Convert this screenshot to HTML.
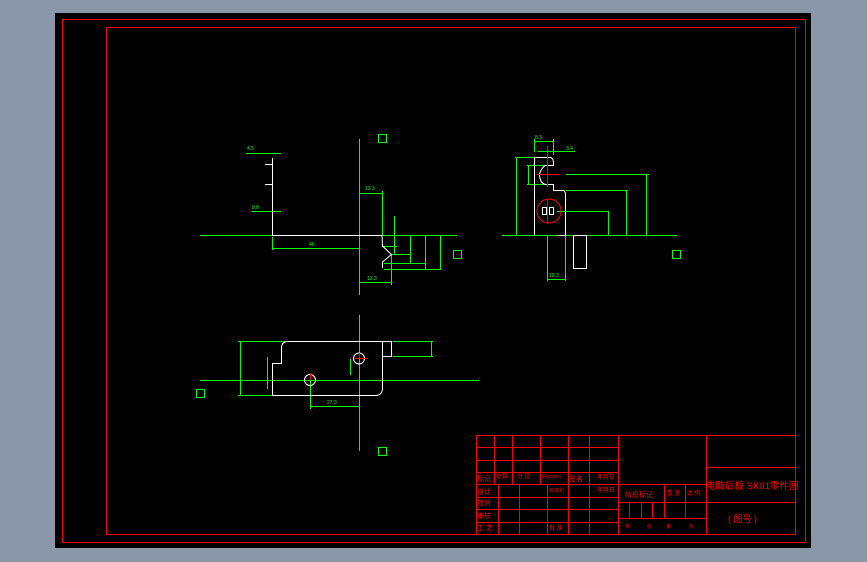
<!DOCTYPE html>
<html><head><meta charset="utf-8"><style>
html,body{margin:0;padding:0;background:#8a97a8;width:867px;height:562px;overflow:hidden}
svg{position:absolute;left:0;top:0}
text{font-family:"Liberation Sans","Noto Sans CJK SC",sans-serif}
</style></head><body>
<svg width="867" height="562" viewBox="0 0 867 562" shape-rendering="crispEdges">
<rect x="55" y="13" width="756" height="535" fill="#000"/>
<rect x="62.5" y="19.5" width="743" height="523" fill="none" stroke="#f00" stroke-width="1"/>
<rect x="106.5" y="27.5" width="689" height="507" fill="none" stroke="#f00" stroke-width="1"/>

<g stroke="#00ff00" fill="none" stroke-width="1">
<!-- view 1 -->
<line x1="200" y1="235.5" x2="457" y2="235.5"/>
<line x1="359.5" y1="139" x2="359.5" y2="295"/>
<line x1="246" y1="153.5" x2="281" y2="153.5"/>
<line x1="252" y1="211.5" x2="281" y2="211.5"/>
<line x1="272.5" y1="237" x2="272.5" y2="250"/>
<line x1="272" y1="248.5" x2="359" y2="248.5"/>
<line x1="359" y1="193.5" x2="382" y2="193.5"/>
<line x1="382.5" y1="191" x2="382.5" y2="235"/>
<line x1="394.5" y1="216" x2="394.5" y2="254"/>
<line x1="382" y1="246.5" x2="397" y2="246.5"/>
<line x1="392" y1="254.5" x2="411" y2="254.5"/>
<line x1="410.5" y1="236" x2="410.5" y2="263"/>
<line x1="384" y1="263.5" x2="426" y2="263.5"/>
<line x1="425.5" y1="236" x2="425.5" y2="269"/>
<line x1="384" y1="269.5" x2="441" y2="269.5"/>
<line x1="440.5" y1="236" x2="440.5" y2="269"/>
<line x1="391.5" y1="255" x2="391.5" y2="285"/>
<line x1="359" y1="282.5" x2="391" y2="282.5"/>
<rect x="378.5" y="134.5" width="8" height="8"/>
<rect x="453.5" y="250.5" width="8" height="8"/>
<!-- view 2 -->
<line x1="502" y1="235.5" x2="677" y2="235.5"/>
<line x1="515" y1="157.5" x2="534" y2="157.5"/>
<line x1="516.5" y1="157" x2="516.5" y2="235"/>
<line x1="527" y1="165.5" x2="545" y2="165.5"/>
<line x1="527" y1="184.5" x2="545" y2="184.5"/>
<line x1="528.5" y1="165" x2="528.5" y2="185"/>
<line x1="566" y1="174.5" x2="649" y2="174.5"/>
<line x1="566" y1="190.5" x2="628" y2="190.5"/>
<line x1="557" y1="211.5" x2="609" y2="211.5"/>
<line x1="646.5" y1="174" x2="646.5" y2="235"/>
<line x1="626.5" y1="190" x2="626.5" y2="235"/>
<line x1="608.5" y1="211" x2="608.5" y2="235"/>
<line x1="534.5" y1="139" x2="534.5" y2="152"/>
<line x1="553.5" y1="139" x2="553.5" y2="155"/>
<line x1="534" y1="141.5" x2="554" y2="141.5"/>
<line x1="538" y1="151.5" x2="575" y2="151.5"/>
<line x1="547.5" y1="235" x2="547.5" y2="281"/>
<line x1="565.5" y1="235" x2="565.5" y2="281"/>
<line x1="547" y1="279.5" x2="566" y2="279.5"/>
<rect x="672.5" y="250.5" width="8" height="8"/>
<!-- view 3 -->
<line x1="200" y1="380.5" x2="479" y2="380.5"/>
<line x1="359.5" y1="315" x2="359.5" y2="451"/>
<line x1="238" y1="341.5" x2="287" y2="341.5"/>
<line x1="240.5" y1="341" x2="240.5" y2="395"/>
<line x1="238" y1="395.5" x2="272" y2="395.5"/>
<line x1="267.5" y1="357" x2="267.5" y2="389"/>
<line x1="393" y1="341.5" x2="433" y2="341.5"/>
<line x1="393" y1="356.5" x2="433" y2="356.5"/>
<line x1="431.5" y1="341" x2="431.5" y2="356"/>
<line x1="350.5" y1="359" x2="350.5" y2="375"/>
<line x1="310.5" y1="380" x2="310.5" y2="409"/>
<line x1="310" y1="406.5" x2="359" y2="406.5"/>
<rect x="196.5" y="389.5" width="8" height="8"/>
<rect x="378.5" y="447.5" width="8" height="8"/>
</g>

<g stroke="#fff" fill="none" stroke-width="1" shape-rendering="auto">
<polyline points="272.5,158 272.5,235.5 382,235.5 382.5,246 391.5,254.5 382.5,262 382.5,268"/>
<line x1="265" y1="164.5" x2="272" y2="164.5"/>
<line x1="265" y1="184.5" x2="272" y2="184.5"/>
<path d="M534.5,235.5 L534.5,157.5 L551,157.5 Q554,159 553.5,165.5 L545,165.5 Q538,172 540,178 Q541,184 546,184.5 L553.5,184.5 L553.5,190.5 L564,190.5 L565.5,193 L565.5,235.5 L557,235.5"/>
<rect x="573.5" y="235.5" width="13" height="33"/>
<path d="M287,341.5 L391.5,341.5 L391.5,356.5 L382.5,356.5 M382.5,341.5 L382.5,389 Q382,395 376,395.5 L272.5,395.5 L272.5,363.5 L281.5,363.5 L281.5,347 Q282,342 287,341.5"/>
<circle cx="310" cy="380" r="5.5"/>
<circle cx="359" cy="358.5" r="5.5"/>
<rect x="542.5" y="207.5" width="4" height="7"/><rect x="549.5" y="207.5" width="4" height="7"/>
</g>
<g stroke="#f00" fill="none" stroke-width="1">
<circle cx="549" cy="211" r="12" shape-rendering="auto"/>
<line x1="547.5" y1="146" x2="547.5" y2="187"/>
<line x1="537" y1="174.5" x2="559" y2="174.5"/>
<line x1="547.5" y1="199" x2="547.5" y2="224"/>
<line x1="359.5" y1="353" x2="359.5" y2="358"/><line x1="354" y1="358.5" x2="368" y2="358.5"/>
<line x1="310.5" y1="373" x2="310.5" y2="380"/>
</g>
<g fill="#00ff00" font-size="5">
<text x="247" y="150">4.5</text><text x="252" y="209">8.8</text><text x="309" y="246">46.</text>
<text x="365" y="190">13.3</text><text x="367" y="280">13.3</text>
<text x="535" y="139">8.3</text><text x="566" y="150">3.4</text><text x="549" y="277">10.3</text>
<text x="327" y="404">27.3</text>
</g>

<!-- title block -->
<g stroke="#f00" fill="none" stroke-width="1">
<line x1="476.5" y1="435.5" x2="795" y2="435.5"/>
<line x1="476.5" y1="435" x2="476.5" y2="534"/>
<line x1="476" y1="447.5" x2="618" y2="447.5"/>
<line x1="476" y1="460.5" x2="618" y2="460.5"/>
<line x1="476" y1="472.5" x2="618" y2="472.5"/>
<line x1="476" y1="484.5" x2="706" y2="484.5"/>
<line x1="476" y1="497.5" x2="618" y2="497.5"/>
<line x1="476" y1="509.5" x2="618" y2="509.5"/>
<line x1="476" y1="522.5" x2="618" y2="522.5"/>
<line x1="494.5" y1="435" x2="494.5" y2="484"/>
<line x1="512.5" y1="435" x2="512.5" y2="484"/>
<line x1="540.5" y1="435" x2="540.5" y2="484"/>
<line x1="568.5" y1="435" x2="568.5" y2="534"/>
<line x1="589.5" y1="435" x2="589.5" y2="534"/>
<line x1="618.5" y1="435" x2="618.5" y2="534"/>
<line x1="498.5" y1="484" x2="498.5" y2="534"/>
<line x1="519.5" y1="484" x2="519.5" y2="534"/>
<line x1="547.5" y1="484" x2="547.5" y2="534"/>
<line x1="618" y1="502.5" x2="706" y2="502.5"/>
<line x1="618" y1="518.5" x2="706" y2="518.5"/>
<line x1="664.5" y1="484" x2="664.5" y2="518"/>
<line x1="685.5" y1="484" x2="685.5" y2="518"/>
<line x1="629.5" y1="502" x2="629.5" y2="518"/>
<line x1="641.5" y1="502" x2="641.5" y2="518"/>
<line x1="652.5" y1="502" x2="652.5" y2="518"/>
<line x1="706.5" y1="435" x2="706.5" y2="534"/>
<line x1="706" y1="467.5" x2="795" y2="467.5"/>
<line x1="706" y1="502.5" x2="795" y2="502.5"/>
</g>
<g fill="#f00" font-family="Liberation Sans, Noto Sans CJK SC, sans-serif" font-size="7">
<text x="477" y="481">标记</text><text x="496" y="478" font-size="6">处数</text><text x="517" y="478" font-size="6">分 区</text>
<text x="542" y="478" font-size="4">更改文件号</text><text x="569" y="481">签名</text><text x="597" y="479" font-size="6">年月日</text>
<text x="477" y="494">设计</text><text x="549" y="492" font-size="5">标准化</text><text x="597" y="492" font-size="6">年月日</text>
<text x="477" y="505">校对</text><text x="477" y="518">审核</text><text x="477" y="530">工 艺</text><text x="549" y="530" font-size="6">批 准</text>
<text x="625" y="497">阶段标记</text><text x="667" y="495" font-size="6">重 量</text><text x="687" y="495" font-size="6">比 例</text>
<text x="625" y="528" font-size="5">共</text><text x="647" y="528" font-size="5">张</text><text x="666" y="528" font-size="5">第</text><text x="689" y="528" font-size="5">张</text>
<text x="706" y="489" font-size="9.5">电脑后板 SK01零件图</text>
<text x="728" y="522" font-size="9">( 图号 )</text>
</g>
</svg>
</body></html>
